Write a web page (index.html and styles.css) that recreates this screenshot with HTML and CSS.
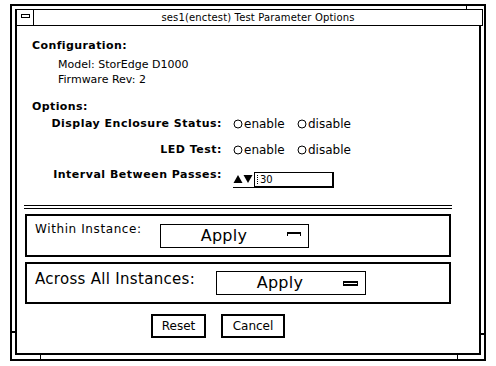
FILE: index.html
```html
<!DOCTYPE html>
<html>
<head>
<meta charset="utf-8">
<link rel="stylesheet" href="styles.css">
</head>
<body>
<div class="window">
  <span class="tick tick-tr"></span>
  <span class="tick tick-bl"></span>
  <span class="tick tick-br"></span>
  <span class="tick tick-lb"></span>
  <span class="tick tick-rb"></span>
  <div class="inner">
    <div class="titlebar">
      <div class="tb-icon"><span class="tb-glyph"></span></div>
      <div class="tb-title">ses1(enctest) Test Parameter Options</div>
    </div>
    <div class="heading h-config">Configuration:</div>
    <div class="info info-first">Model: StorEdge D1000</div>
    <div class="info">Firmware Rev: 2</div>
    <div class="heading h-options">Options:</div>
    <div class="form">
      <div class="lbl">Display Enclosure Status:</div>
      <div class="ctl radios">
        <span class="opt opt-first"><svg class="radio" width="10" height="10" viewBox="0 0 10 10"><circle cx="5" cy="5" r="4" fill="none" stroke="#000" stroke-width="1"/></svg>enable</span>
        <span class="opt"><svg class="radio" width="10" height="10" viewBox="0 0 10 10"><circle cx="5" cy="5" r="4" fill="none" stroke="#000" stroke-width="1"/></svg>disable</span>
      </div>
      <div class="lbl">LED Test:</div>
      <div class="ctl radios">
        <span class="opt opt-first"><svg class="radio" width="10" height="10" viewBox="0 0 10 10"><circle cx="5" cy="5" r="4" fill="none" stroke="#000" stroke-width="1"/></svg>enable</span>
        <span class="opt"><svg class="radio" width="10" height="10" viewBox="0 0 10 10"><circle cx="5" cy="5" r="4" fill="none" stroke="#000" stroke-width="1"/></svg>disable</span>
      </div>
      <div class="lbl">Interval Between Passes:</div>
      <div class="ctl numfield">
        <span class="spinner"><svg width="20" height="10" viewBox="0 0 20 10"><polygon points="0.5,9 5,1 9.5,9" fill="#000"/><polygon points="10.5,1 19.5,1 15,9" fill="#000"/></svg></span>
        <span class="numbox"><span class="caret"></span>30</span>
      </div>
    </div>
    <div class="sep"></div>
    <div class="group g1">
      <div class="g-lbl g1-lbl">Within Instance:</div>
      <div class="menubtn mb1"><span class="mb-text">Apply</span><span class="mark mark-open"></span></div>
    </div>
    <div class="group g2">
      <div class="g-lbl g2-lbl">Across All Instances:</div>
      <div class="menubtn mb2"><span class="mb-text">Apply</span><span class="mark mark-closed"></span></div>
    </div>
    <div class="buttons">
      <div class="btn btn-reset">Reset</div>
      <div class="btn btn-cancel">Cancel</div>
    </div>
  </div>
</div>
</body>
</html>
```
FILE: styles.css
```css
* { box-sizing: border-box; }
html, body { margin: 0; padding: 0; background: #fff; }
body {
  width: 496px;
  height: 366px;
  overflow: hidden;
  font-family: "DejaVu Sans", "Liberation Sans", sans-serif;
  font-size: 11px;
  color: #000;
}
.window {
  position: relative;
  margin: 4px 0 0 10px;
  width: 476px;
  height: 357px;
  border: 2px solid #000;
  padding: 3px 3px 4px 3px;
}
.tick { position: absolute; background: #000; }
.tick-tr { left: 454px; top: 0; width: 1px; height: 3px; }
.tick-bl { left: 28px; bottom: 0; width: 1px; height: 4px; }
.tick-br { left: 445px; bottom: 0; width: 1px; height: 4px; }
.tick-lb { left: 0; top: 325px; width: 3px; height: 2px; }
.tick-rb { right: 0; top: 327px; width: 3px; height: 2px; }

.inner {
  height: 100%;
  border: 2px solid #000;
  border-top: 0;
  display: flex;
  flex-direction: column;
}
.titlebar {
  display: flex;
  height: 17px;
  margin-right: -4px;
  border-top: 1px solid #000;
  border-bottom: 1px solid #000;
  border-right: 1px solid #000;
  background: #fff;
}
.tb-icon {
  width: 17px;
  border-right: 1px solid #000;
  display: flex;
  justify-content: center;
  align-items: flex-start;
}
.tb-glyph {
  margin-top: 4px;
  width: 9px;
  height: 4px;
  border: 1px solid #000;
}
.tb-title {
  flex: 1;
  text-align: center;
  line-height: 15px;
  font-size: 10px;
  letter-spacing: 0.15px;
  white-space: nowrap;
}
.heading {
  font-weight: bold;
  line-height: 15px;
  margin-left: 15px;
  letter-spacing: 0.4px;
}
.h-config { margin-top: 12px; }
.h-options { margin-top: 12px; }
.info { margin-left: 41px; line-height: 15px; }
.info-first { margin-top: 4px; }

.form {
  margin-top: 2px;
  display: grid;
  grid-template-columns: 205px auto;
  grid-template-rows: 26px 25px 21px;
  column-gap: 10px;
}
.lbl {
  font-weight: bold;
  text-align: right;
  line-height: 15px;
  letter-spacing: 0.5px;
  white-space: nowrap;
}
.radios {
  display: flex;
  align-items: center;
  height: 15px;
  font-size: 12px;
}
.opt { display: flex; align-items: center; }
.opt-first { width: 64px; }
.radio { margin-left: 1px; margin-right: 1px; flex: none; }
.numfield {
  display: flex;
  margin-top: 5px;
  margin-left: 1px;
  height: 16px;
}
.spinner {
  width: 21px;
  height: 16px;
  border-bottom: 1px solid #000;
  display: flex;
  align-items: flex-start;
  padding-top: 2px;
}
.numbox {
  width: 80px;
  height: 16px;
  border: 1px solid #000;
  border-right-width: 2px;
  border-bottom-width: 2px;
  font-size: 10px;
  line-height: 13px;
  padding-left: 5px;
  position: relative;
}
.caret {
  position: absolute;
  left: 2px;
  top: 2px;
  height: 9px;
  border-left: 1px dotted #000;
}
.sep {
  margin-top: 17px;
  margin-left: 7px;
  width: 428px;
  height: 4px;
  border-top: 1px solid #000;
  border-bottom: 1px solid #000;
}
.group {
  margin-top: 5px;
  margin-left: 8px;
  width: 426px;
  border: 2px solid #000;
  display: flex;
  align-items: flex-start;
  padding-left: 8px;
}
.g1 { height: 43px; }
.g2 { height: 42px; }
.g-lbl { white-space: nowrap; }
.g1-lbl {
  width: 125px;
  font-size: 12px;
  letter-spacing: 0.6px;
  line-height: 15px;
  margin-top: 6px;
}
.g2-lbl {
  width: 181px;
  font-size: 15px;
  letter-spacing: 0.3px;
  line-height: 18px;
  margin-top: 6px;
}
.menubtn {
  height: 24px;
  border: 1px solid #000;
  display: flex;
  align-items: center;
}
.mb1 { width: 149px; margin-top: 8px; }
.mb2 { width: 150px; margin-top: 7px; }
.mb-text {
  flex: 1;
  text-align: center;
  font-size: 16px;
  line-height: 20px;
  letter-spacing: 0.3px;
}
.mark { flex: none; margin-right: 7px; }
.mark-open {
  width: 14px;
  height: 4px;
  border-top: 2px solid #000;
  border-left: 1px solid #000;
  border-right: 1px solid #000;
  margin-bottom: 4px;
}
.mark-closed {
  width: 15px;
  height: 5px;
  border-top: 2px solid #000;
  border-bottom: 2px solid #000;
  border-left: 1px solid #000;
  border-right: 1px solid #000;
}
.buttons {
  display: flex;
  margin-top: 10px;
  padding-left: 134px;
  gap: 15px;
}
.btn {
  height: 24px;
  border: 2px solid #000;
  font-size: 12px;
  line-height: 20px;
  text-align: center;
}
.btn-reset { width: 55px; }
.btn-cancel { width: 64px; }
```
